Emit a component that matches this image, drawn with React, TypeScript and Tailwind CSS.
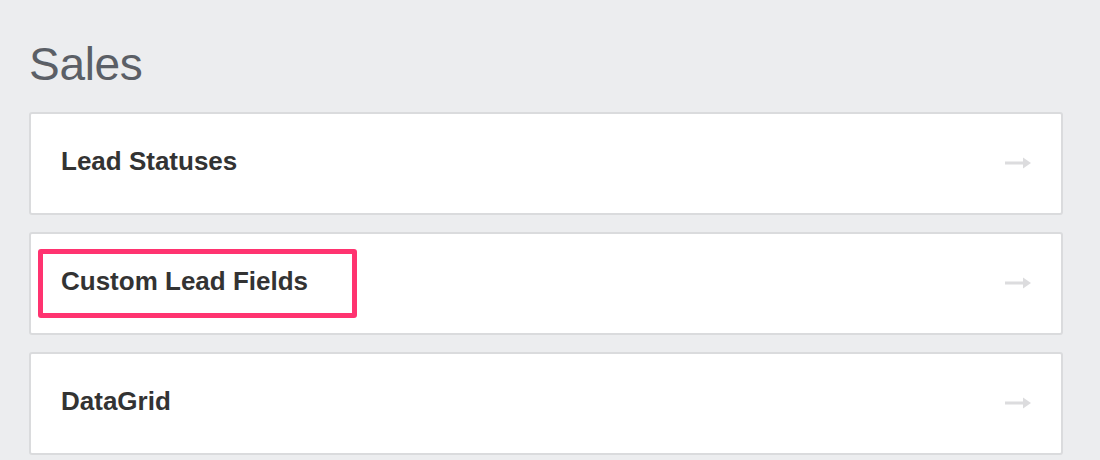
const items = ["Lead Statuses", "Custom Lead Fields", "DataGrid"];

function Arrow() {
  return (
    <svg width="26" height="14" viewBox="0 0 26 14" className="mb-[2px] shrink-0">
      <rect x="0" y="5.5" width="19" height="3" fill="#dcdcde" />
      <polygon points="18,1.5 26,7 18,12.5" fill="#dcdcde" />
    </svg>
  );
}

export default function App() {
  return (
    <main
      className="min-h-[460px] bg-[#ecedef] pl-[29px] pr-[37px] pt-[36px]"
      style={{ fontFamily: '"Liberation Sans", Arial, sans-serif' }}
    >
      <h1 className="text-[46px] leading-[56px] font-normal text-[#5b5f66] tracking-[-0.3px]">
        Sales
      </h1>
      <div className="mt-[20px] flex flex-col gap-[17px]">
        {items.map((label, i) => (
          <div
            key={label}
            className="relative flex h-[103px] items-center justify-between rounded-[3px] border-2 border-[#dadbdd] bg-white pl-[30px] pr-[30px]"
          >
            <span className="mb-[4px] text-[26px] font-bold text-[#333333]">{label}</span>
            <Arrow />
            {i === 1 && (
              <div className="absolute left-[7px] top-[15px] h-[69px] w-[319px] rounded-[3px] border-[5px] border-[#ff3370]" />
            )}
          </div>
        ))}
      </div>
    </main>
  );
}
